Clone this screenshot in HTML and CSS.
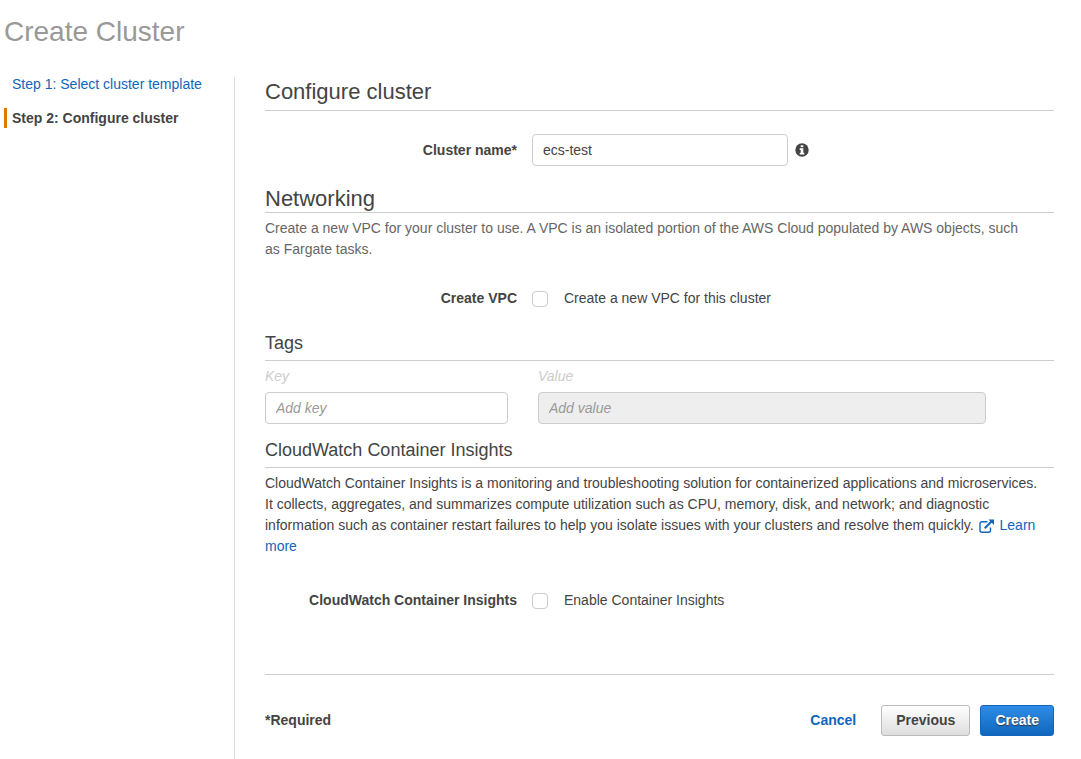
FILE: index.html
```html
<!DOCTYPE html>
<html lang="en">
<head>
<meta charset="utf-8">
<meta name="viewport" content="width=device-width, initial-scale=1">
<title>Create Cluster</title>
<link rel="stylesheet" href="styles.css">
</head>
<body>
<h1 class="page-title">Create Cluster</h1>
<div class="wizard">
  <nav class="steps" aria-label="Steps">
    <a class="step" href="#">Step 1: Select cluster template</a>
    <span class="step step-current" aria-current="step">Step 2: Configure cluster</span>
  </nav>
  <main class="content">
    <form class="form">
      <section class="section-main">
        <h2 class="heading">Configure cluster</h2>
        <div class="field-row">
          <label class="field-label" for="name">Cluster name*</label>
          <div class="field-control">
            <input class="text-input name-input" id="name" type="text" value="ecs-test">
            <svg class="info-icon" viewBox="0 0 14 14" role="img" aria-label="Info">
              <circle cx="7" cy="7" r="6.7" fill="#444"/>
              <path fill="#fff" d="M5.7 2.2h2.6v2H5.700zM4.700 5.300h3.600v4.500h1v1.700H4.700V9.800h1V7h-1z"/>
            </svg>
          </div>
        </div>
      </section>

      <section class="section-network">
        <h2 class="heading heading-tight">Networking</h2>
        <p class="text text-muted">Create a new VPC for your cluster to use. A VPC is an isolated portion of the AWS Cloud populated by AWS objects, such as Fargate tasks.</p>
        <div class="field-row check-row">
          <span class="field-label" id="vpc-label">Create VPC</span>
          <label class="check"><input class="checkbox" type="checkbox" aria-describedby="vpc-label">Create a new VPC for this cluster</label>
        </div>
      </section>

      <section class="section-tags">
        <h3 class="subheading">Tags</h3>
        <div class="tags">
          <div class="tag-key">
            <label class="tag-label" for="key">Key</label>
            <input class="text-input" id="key" type="text" placeholder="Add key">
          </div>
          <div class="tag-value">
            <label class="tag-label" for="value">Value</label>
            <input class="text-input" id="value" type="text" placeholder="Add value" disabled>
          </div>
        </div>
      </section>

      <section class="section-insights">
        <h3 class="subheading">CloudWatch Container Insights</h3>
        <p class="text">CloudWatch Container Insights is a monitoring and troubleshooting solution for containerized applications and microservices. It collects, aggregates, and summarizes compute utilization such as CPU, memory, disk, and network; and diagnostic information such as container restart failures to help you isolate issues with your clusters and resolve them quickly. <a class="link" href="#"><svg class="external-icon" viewBox="0 0 16 14" aria-hidden="true"><path fill="none" stroke="#1166bb" stroke-width="1.4" d="M8.5 2.7H3A2 2 0 0 0 1 4.700V11.200a2 2 0 0 0 2 2h6.500a2 2 0 0 0 2-2V8.500"/><path fill="none" stroke="#1166bb" stroke-width="2" d="M5.700 9.300 12.500 2.500"/><path fill="#1166bb" d="M9.500.5H15V6z"/></svg>Learn more</a></p>
        <div class="field-row check-row insights-row">
          <span class="field-label" id="insights-label">CloudWatch Container Insights</span>
          <label class="check"><input class="checkbox" type="checkbox" aria-describedby="insights-label">Enable Container Insights</label>
        </div>
      </section>

      <footer class="footer">
        <strong class="required">*Required</strong>
        <a class="link cancel" href="#">Cancel</a>
        <button class="button" type="button">Previous</button>
        <button class="button button-primary" type="submit">Create</button>
      </footer>
    </form>
  </main>
</div>
</body>
</html>
```
FILE: styles.css
```css
* {
  box-sizing: border-box;
}

body {
  display: flex;
  flex-direction: column;
  min-height: 100vh;
  margin: 0;
  padding-left: 4px;
  background: #fff;
  color: #444;
  font: 14px/21px "Liberation Sans", Arial, sans-serif;
}

h1, h2, h3, p {
  margin: 0;
  font-weight: normal;
}

.page-title {
  padding: 16px 0 29px;
  color: #999;
  font-size: 28px;
  line-height: 32px;
}

.wizard {
  display: flex;
  flex: 1;
}

.steps {
  display: flex;
  flex: none;
  flex-direction: column;
  gap: 17px;
  width: 231px;
  border-right: 1px solid #ddd;
}

.step {
  padding-left: 8px;
  color: #16b;
  line-height: 14px;
  text-decoration: none;
}

.step-current {
  padding-left: 5px;
  border-left: 3px solid #e07700;
  color: #444;
  font-weight: bold;
  line-height: 20px;
}

.content {
  flex: 1;
  min-width: 0;
  padding: 0 27px 22px 30px;
}

.heading {
  padding-bottom: 3px;
  border-bottom: 1px solid #ccc;
  font-size: 22px;
  line-height: 30px;
}

.heading-tight {
  padding-bottom: 0;
  line-height: 26px;
}

.subheading {
  padding-bottom: 4px;
  border-bottom: 1px solid #ccc;
  font-size: 18px;
  line-height: 26px;
}

.field-row {
  display: grid;
  grid-template-columns: 14fr 29fr;
  gap: 15px;
  align-items: center;
  padding: 23px 0 20px;
}

.field-label {
  font-weight: bold;
  text-align: right;
}

.field-control {
  display: flex;
  gap: 7px;
  align-items: center;
}

.text-input {
  display: block;
  width: 100%;
  height: 32px;
  padding: 0 10px;
  border: 1px solid #ccc;
  border-radius: 4px;
  background: #fff;
  color: #444;
  font: inherit;
}

.text-input::placeholder {
  color: #999;
  font-style: italic;
  opacity: 1;
}

.text-input:disabled {
  background: #eee;
}

.name-input {
  width: 256px;
}

.info-icon {
  width: 14px;
  height: 14px;
}

.text {
  padding: 5px 8px 0 0;
}

.text-muted {
  padding-right: 18px;
  color: #666;
}

.check-row {
  padding: 28px 0 21px;
}

.insights-row {
  padding-top: 33px;
}

.check {
  display: flex;
  gap: 16px;
  align-items: center;
}

.checkbox {
  flex: none;
  width: 16px;
  height: 16px;
  margin: 0;
  border: 1px solid #ccc;
  border-radius: 4px;
  background: #fff;
  appearance: none;
}

.checkbox:checked {
  background: #16b;
}

.tags {
  display: grid;
  grid-template-columns: repeat(12, minmax(0, 1fr));
  column-gap: 30px;
  padding: 5px 0 13px;
}

.tag-key {
  grid-column: span 4;
}

.tag-value {
  grid-column: span 7;
}

.tag-label {
  display: block;
  padding-bottom: 5px;
  color: #ccc;
  font-style: italic;
}

.link {
  color: #16b;
  text-decoration: none;
}

.external-icon {
  width: 16px;
  height: 14px;
  margin: 0 5px 0 1px;
  vertical-align: -3px;
}

.footer {
  display: flex;
  gap: 10px;
  align-items: center;
  margin-top: 42px;
  padding-top: 30px;
  border-top: 1px solid #ccc;
}

.required {
  margin-right: auto;
}

.cancel {
  margin-right: 15px;
  font-weight: bold;
}

.button {
  height: 31px;
  padding: 0 14px;
  border: 1px solid #bbb;
  border-radius: 3px;
  background: linear-gradient(#fff, #ddd);
  color: #444;
  font: inherit;
  font-weight: bold;
}

.button-primary {
  border-color: #16b;
  background: linear-gradient(#2e8de8, #16b);
  color: #fff;
  text-shadow: 0 1px 1px #333;
}
```
